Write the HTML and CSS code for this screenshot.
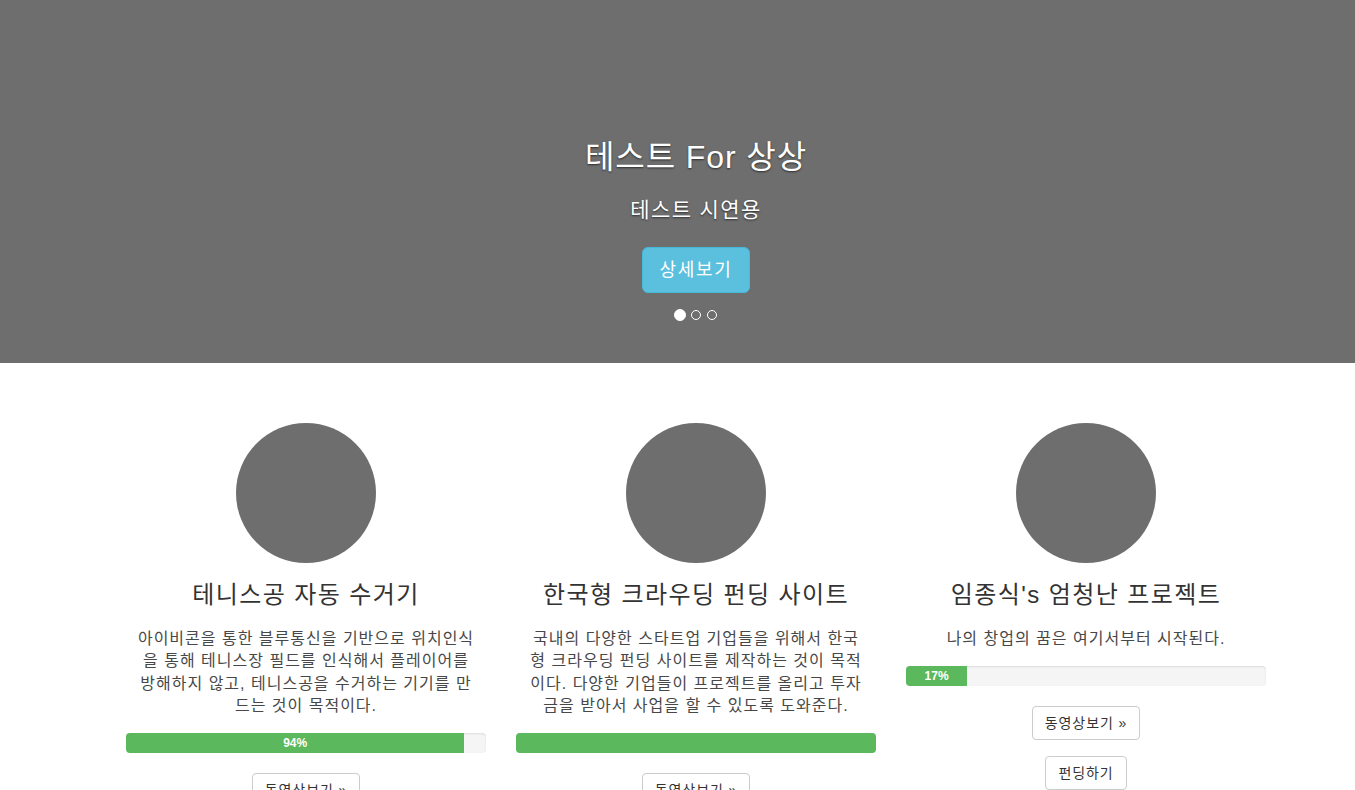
FILE: index.html
```html
<!DOCTYPE html>
<html lang="ko">
<head>
<meta charset="utf-8">
<title>테스트 For 상상</title>
<link rel="stylesheet" href="styles.css">
</head>
<body>
<header class="hero">
  <h1 class="hero-title">테스트 For 상상</h1>
  <p class="hero-sub">테스트 시연용</p>
  <a class="btn-hero" href="#">상세보기</a>
  <ol class="indicators">
    <li class="dot active"></li>
    <li class="dot"></li>
    <li class="dot"></li>
  </ol>
</header>
<main class="marketing">
  <div class="row">
    <section class="col">
      <div class="circle"></div>
      <h2 class="col-title">테니스공 자동 수거기</h2>
      <p class="col-text">아이비콘을 통한 블루통신을 기반으로 위치인식을 통해 테니스장 필드를 인식해서 플레이어를 방해하지 않고, 테니스공을 수거하는 기기를 만드는 것이 목적이다.</p>
      <div class="progress"><div class="bar" style="width:94%">94%</div></div>
      <a class="btn" href="#">동영상보기 &raquo;</a>
    </section>
    <section class="col">
      <div class="circle"></div>
      <h2 class="col-title">한국형 크라우딩 펀딩 사이트</h2>
      <p class="col-text">국내의 다양한 스타트업 기업들을 위해서 한국형 크라우딩 펀딩 사이트를 제작하는 것이 목적이다. 다양한 기업들이 프로젝트를 올리고 투자금을 받아서 사업을 할 수 있도록 도와준다.</p>
      <div class="progress"><div class="bar" style="width:100%"></div></div>
      <a class="btn" href="#">동영상보기 &raquo;</a>
    </section>
    <section class="col">
      <div class="circle"></div>
      <h2 class="col-title">임종식's 엄청난 프로젝트</h2>
      <p class="col-text">나의 창업의 꿈은 여기서부터 시작된다.</p>
      <div class="progress"><div class="bar" style="width:17%">17%</div></div>
      <a class="btn" href="#">동영상보기 &raquo;</a>
      <a class="btn btn-second" href="#">펀딩하기</a>
    </section>
  </div>
</main>
</body>
</html>
```
FILE: styles.css
```css
html, body {
  margin: 0;
  padding: 0;
}
body {
  font-family: "Liberation Sans", "Noto Sans CJK KR", sans-serif;
  color: #333;
  background: #fff;
}
.hero {
  box-sizing: border-box;
  height: 363px;
  background: #6e6e6e;
  padding: 140px 0 0 37px;
  display: flex;
  flex-direction: column;
  align-items: center;
  color: #fff;
  text-shadow: 0 1px 2px rgba(0, 0, 0, 0.6);
}
.hero-title {
  margin: 0;
  font-size: 32px;
  line-height: 35px;
  font-weight: normal;
  letter-spacing: 0.9px;
}
.hero-sub {
  margin: 23px 0 0;
  font-size: 21px;
  line-height: 23px;
  letter-spacing: 1.4px;
}
.btn-hero {
  margin-top: 26px;
  padding: 10px 16px;
  font-size: 18px;
  line-height: 24px;
  letter-spacing: 1.7px;
  border-radius: 6px;
  background: #5bc0de;
  border: 1px solid #46b8da;
  color: #fff;
  text-decoration: none;
  text-shadow: none;
}
.indicators {
  margin: 16px 0 0;
  padding: 0;
  list-style: none;
  display: flex;
  align-items: center;
  gap: 4px;
}
.dot {
  box-sizing: border-box;
  width: 10px;
  height: 10px;
  margin: 1px;
  border: 1px solid #fff;
  border-radius: 50%;
}
.dot.active {
  width: 12px;
  height: 12px;
  margin: 0;
  background: #fff;
}
.marketing {
  padding-top: 60px;
}
.row {
  margin-left: 111px;
  width: 1170px;
  display: grid;
  grid-template-columns: repeat(3, 390px);
}
.col {
  padding: 0 15px;
  display: flex;
  flex-direction: column;
  align-items: center;
  text-align: center;
}
.circle {
  width: 140px;
  height: 140px;
  border-radius: 50%;
  background: #6e6e6e;
}
.col-title {
  margin: 19px 0 0;
  font-size: 24px;
  line-height: 26px;
  font-weight: normal;
  letter-spacing: 1.4px;
  color: #333;
}
.col-text {
  margin: 20px 0 0;
  width: 338px;
  font-size: 16px;
  line-height: 22.3px;
  letter-spacing: 1px;
  color: #484848;
}
.progress {
  margin-top: 16px;
  width: 360px;
  height: 20px;
  background: #f5f5f5;
  border-radius: 4px;
  overflow: hidden;
  box-shadow: inset 0 1px 2px rgba(0, 0, 0, 0.1);
}
.bar {
  height: 20px;
  background: #5cb85c;
  color: #fff;
  font-size: 12px;
  font-weight: bold;
  line-height: 20px;
  text-align: center;
}
.btn {
  margin-top: 20px;
  padding: 6px 12px;
  font-size: 14px;
  line-height: 20px;
  letter-spacing: 0.9px;
  border: 1px solid #ccc;
  border-radius: 4px;
  background: #fff;
  color: #333;
  text-decoration: none;
}
.btn-second {
  margin-top: 16px;
}
```
